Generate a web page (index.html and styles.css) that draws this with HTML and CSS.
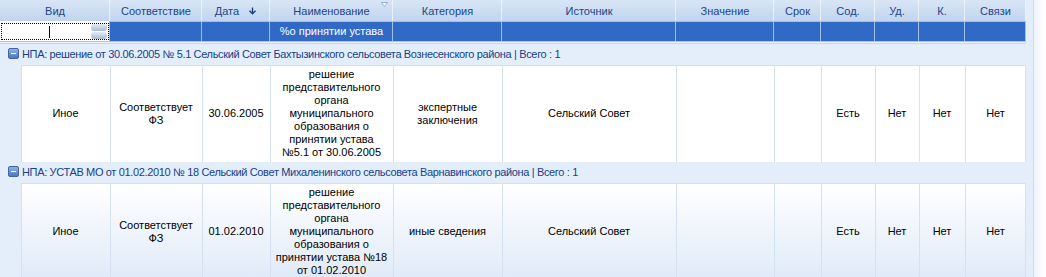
FILE: index.html
```html
<!DOCTYPE html>
<html>
<head>
<meta charset="utf-8">
<link rel="stylesheet" href="styles.css">
</head>
<body>
<div class="wrap">
  <div class="gridpane">
    <table class="grid">
      <colgroup>
        <col class="c-ind"><col class="c-vid"><col class="c-sootv"><col class="c-data"><col class="c-name"><col class="c-kat"><col class="c-ist"><col class="c-zn"><col class="c-srok"><col class="c-sod"><col class="c-ud"><col class="c-k"><col class="c-sv">
      </colgroup>
      <thead>
        <tr class="hdr">
          <th colspan="2">Вид</th>
          <th>Соответствие</th>
          <th><span class="sort">Дата <svg class="arr" width="9" height="8" viewBox="0 0 9 8"><path d="M4.5 0.5v6M1.5 3.8l3 3 3-3" fill="none" stroke="#15428b" stroke-width="1.4"/></svg></span></th>
          <th class="filt">Наименование<svg class="tri" width="7" height="5" viewBox="0 0 7 5"><path d="M0.5 0.5h6l-3 4z" fill="#fff" stroke="#7e9cc8" stroke-width="0.8"/></svg></th>
          <th>Категория</th>
          <th>Источник</th>
          <th>Значение</th>
          <th>Срок</th>
          <th>Сод.</th>
          <th>Уд.</th>
          <th>К.</th>
          <th>Связи</th>
        </tr>
        <tr class="frow">
          <td colspan="2" class="fin"><div class="inp"><span class="caret"></span><span class="spin"><i></i><i></i></span></div></td>
          <td></td><td></td><td class="ftext">%о принятии устава</td><td></td><td></td><td></td><td></td><td></td><td></td><td></td><td></td>
        </tr>
        <tr class="sep"><td colspan="13"></td></tr>
      </thead>
      <tbody>
        <tr class="grp"><td colspan="13"><span class="exp"><i></i></span><span class="gtxt">НПА: решение от 30.06.2005 № 5.1 Сельский Совет Бахтызинского сельсовета Вознесенского района | Всего : 1</span></td></tr>
        <tr class="row r1">
          <td class="ind"></td>
          <td>Иное</td>
          <td>Соответствует ФЗ</td>
          <td>30.06.2005</td>
          <td>решение представительного органа муниципального образования о принятии устава №5.1&nbsp;от 30.06.2005</td>
          <td>экспертные заключения</td>
          <td>Сельский Совет</td>
          <td></td><td></td>
          <td>Есть</td><td>Нет</td><td>Нет</td><td>Нет</td>
        </tr>
        <tr class="grp"><td colspan="13"><span class="exp"><i></i></span><span class="gtxt">НПА: УСТАВ МО от 01.02.2010 № 18 Сельский Совет Михаленинского сельсовета Варнавинского района | Всего : 1</span></td></tr>
        <tr class="row r2">
          <td class="ind"></td>
          <td>Иное</td>
          <td>Соответствует ФЗ</td>
          <td>01.02.2010</td>
          <td>решение представительного органа муниципального образования о принятии устава №18 от 01.02.2010</td>
          <td>иные сведения</td>
          <td>Сельский Совет</td>
          <td></td><td></td>
          <td>Есть</td><td>Нет</td><td>Нет</td><td>Нет</td>
        </tr>
      </tbody>
    </table>
  </div>
  <div class="edge"></div>
</div>
</body>
</html>
```
FILE: styles.css
```css
html, body {
  margin: 0;
  padding: 0;
  background: #ffffff;
}
body {
  font-family: "Liberation Sans", Arial, sans-serif;
  font-size: 11px;
  color: #000;
  overflow: hidden;
}
.wrap {
  display: flex;
  width: 1046px;
  height: 277px;
  overflow: hidden;
}
.gridpane {
  width: 1033px;
  flex: none;
  background: #e4eefb;
  border-right: 1px solid #cddcef;
}
.edge {
  flex: 1;
  background: linear-gradient(to right, #eef4fc, #ffffff);
}
.grid {
  border-collapse: collapse;
  border-spacing: 0;
  table-layout: fixed;
  width: 1026px;
}
.grid td, .grid th {
  padding: 0;
}
.c-ind { width: 21px; }
.c-vid { width: 89px; }
.c-sootv { width: 92px; }
.c-data { width: 68px; }
.c-name { width: 123px; }
.c-kat { width: 109px; }
.c-ist { width: 174px; }
.c-zn { width: 98px; }
.c-srok { width: 47px; }
.c-sod { width: 54px; }
.c-ud { width: 44px; }
.c-k { width: 46px; }
.c-sv { width: 61px; }

.hdr th {
  height: 19px;
  padding-top: 2px;
  font-weight: normal;
  color: #1d4587;
  background: linear-gradient(#d8e5f6, #c1d5ef);
  box-shadow: inset -1px 0 0 #eaf1fa;
  text-align: center;
  vertical-align: middle;
  line-height: 13px;
}
.hdr th.filt { position: relative; }
.tri {
  position: absolute;
  right: 5px;
  top: 2px;
}
.sort { white-space: nowrap; }
.arr { margin-left: 6px; vertical-align: 0; }

.frow td {
  height: 19px;
  background: #3169c6;
  color: #fff;
  box-shadow: inset -1px 0 0 #a2bfe8, inset 0 1px 0 #a2bfe8;
  text-align: center;
  line-height: 13px;
  padding-top: 1px;
}
.frow td.fin {
  height: 17px;
  background: #fff;
  padding: 2px 1px 1px 1px;
  box-shadow: inset -1px 0 0 #a2bfe8;
}
.inp {
  height: 17px;
  border: 1px dotted #000;
  box-sizing: border-box;
  display: flex;
  align-items: center;
  justify-content: space-between;
  padding-left: 47px;
}
.caret {
  width: 1px;
  height: 12px;
  background: #000;
}
.spin {
  display: flex;
  flex-direction: column;
  gap: 1px;
  width: 16px;
  margin-right: 1px;
}
.spin i {
  display: block;
  height: 7px;
  border-radius: 3px;
  background: linear-gradient(#e4ecf5, #a7bbd2);
}
.sep td {
  height: 3px;
  background: #eaf2fc;
  box-shadow: inset 0 1px 0 #a8c4ea, inset 0 -1px 0 #c4d8f1;
}
.grp td {
  height: 21px;
  padding-left: 8px;
  color: #15428b;
  white-space: nowrap;
  vertical-align: middle;
  line-height: 13px;
}
.gtxt {
  letter-spacing: -0.35px;
}
.exp {
  display: inline-block;
  width: 11px;
  height: 11px;
  border-radius: 2px;
  background: linear-gradient(#8fb2e0, #4c79bd);
  border: 1px solid #3e66a6;
  box-sizing: border-box;
  vertical-align: -1px;
  margin-right: 3px;
  position: relative;
}
.exp i {
  position: absolute;
  left: 2px;
  right: 2px;
  top: 4px;
  height: 1px;
  background: #fff;
}
.row td {
  height: 97px;
  padding: 0 3px;
  text-align: center;
  vertical-align: middle;
  line-height: 13px;
  background: #fff;
  box-shadow: inset 1px 0 0 #d3e1f2, inset 0 1px 0 #d3e1f2;
}
.row td.ind {
  background: #e4eefb;
  box-shadow: none;
}
.r2 td {
  background: linear-gradient(#ffffff, #dfeaf8);
}
.row td:last-child {
  box-shadow: inset 1px 0 0 #d3e1f2, inset -1px 0 0 #d3e1f2, inset 0 1px 0 #d3e1f2;
}
```
